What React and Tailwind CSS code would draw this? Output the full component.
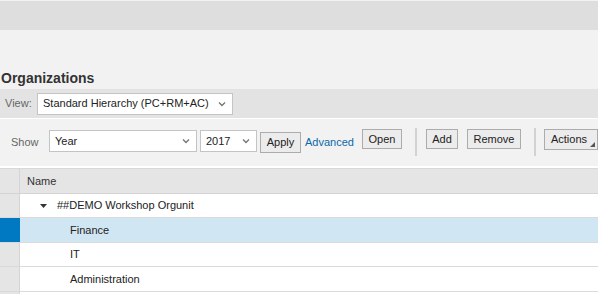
import React from 'react';

const Chevron = () => (
  <svg width="8" height="6" viewBox="0 0 8 6" className="shrink-0">
    <path d="M1 1.5 L4 4.5 L7 1.5" stroke="#777" strokeWidth="1.4" fill="none" />
  </svg>
);

function Select({ value, className }) {
  return (
    <div className={`flex items-center justify-between whitespace-nowrap bg-white border border-[#c4c4c4] pl-[5px] pr-[6px] text-[11px] text-[#222] ${className}`}>
      <span>{value}</span>
      <Chevron />
    </div>
  );
}

function Btn({ children, className = '' }) {
  return (
    <div className={`flex items-center justify-center bg-[#ececec] border border-[#acacac] text-[11px] text-[#222] ${className}`}>
      {children}
    </div>
  );
}

const rows = [
  { label: '##DEMO Workshop Orgunit', level: 0, open: true, h: 'h-[24px]' },
  { label: 'Finance', level: 1, selected: true, h: 'h-[25px]' },
  { label: 'IT', level: 1, h: 'h-[24px]' },
  { label: 'Administration', level: 1, h: 'h-[25px]' },
];

export default function App() {
  return (
    <div className="w-[598px] h-[294px] overflow-hidden bg-[#f2f2f2] font-['Liberation_Sans',Arial,sans-serif]">
      <div className="h-px" />
      <div className="h-[29px] bg-[#dedede]" />
      <div className="h-[38px]" />
      <div className="h-[21px] text-[14px] font-bold text-[#333] leading-[21px] pl-px">Organizations</div>

      {/* view bar */}
      <div className="h-[29px] bg-[#e3e3e3] flex items-center pl-[5px]">
        <span className="w-[32px] text-[11px] text-[#666]">View:</span>
        <Select value="Standard Hierarchy (PC+RM+AC)" className="w-[196px] h-[22px]" />
      </div>

      {/* toolbar */}
      <div className="h-[48px] flex items-start pl-[11px] border-t border-white">
        <span className="w-[38px] mt-[15px] text-[11px] text-[#666]">Show</span>
        <Select value="Year" className="w-[148px] h-[22px] mt-[11px]" />
        <Select value="2017" className="w-[57px] h-[22px] ml-[3px] mt-[11px]" />
        <Btn className="w-[41px] h-[21px] ml-[3px] mt-[13px]">Apply</Btn>
        <span className="w-[61px] pl-[4px] mt-[15px] text-[11px] text-[#0a6aa8]">Advanced</span>
        <Btn className="w-[40px] h-[20px] mt-[10px]">Open</Btn>
        <div className="w-[2px] h-[28px] bg-[#d2d2d2] ml-[13px] mt-[9px]" />
        <Btn className="w-[32px] h-[20px] ml-[9px] mt-[10px]">Add</Btn>
        <Btn className="w-[54px] h-[20px] ml-[9px] mt-[10px]">Remove</Btn>
        <div className="w-[2px] h-[28px] bg-[#d2d2d2] ml-[13px] mt-[9px]" />
        <Btn className="relative w-[54px] h-[21px] ml-[8px] mt-[10px] pr-[4px]">
          Actions
          <svg width="5" height="5" viewBox="0 0 5 5" className="absolute right-[2px] bottom-[2px]">
            <path d="M5 0 L5 5 L0 5 Z" fill="#555" />
          </svg>
        </Btn>
      </div>
      <div className="h-[2px] bg-white" />

      {/* table */}
      <div className="bg-white">
        <div className="flex h-[26px] bg-[#e5e5e5] border-t border-[#d8d8d8] border-b border-b-[#d4d4d4]">
          <div className="w-[20px] border-r border-[#d4d4d4]" />
          <div className="flex items-center pl-[7px] text-[11px] text-[#333]">Name</div>
        </div>
        {rows.map((r) => (
          <div
            key={r.label}
            className={`flex ${r.h} border-b border-[#dadada] ${r.selected ? 'bg-[#d1e6f3]' : 'bg-white'}`}
          >
            <div className={`w-[20px] shrink-0 border-r ${r.selected ? 'bg-[#0078c2] border-[#0078c2]' : 'bg-[#e5e5e5] border-[#d4d4d4]'}`} />
            <div className={`flex items-center text-[11px] text-[#222] ${r.level === 0 ? 'pl-[20px]' : 'pl-[50px]'}`}>
              {r.open && (
                <svg width="7" height="4" viewBox="0 0 7 4" className="mr-[10px]">
                  <path d="M0 0 L7 0 L3.5 4 Z" fill="#333" />
                </svg>
              )}
              {r.label}
            </div>
          </div>
        ))}
        <div className="flex h-[10px]">
          <div className="w-[20px] bg-[#e5e5e5] border-r border-[#d4d4d4]" />
        </div>
      </div>
    </div>
  );
}
